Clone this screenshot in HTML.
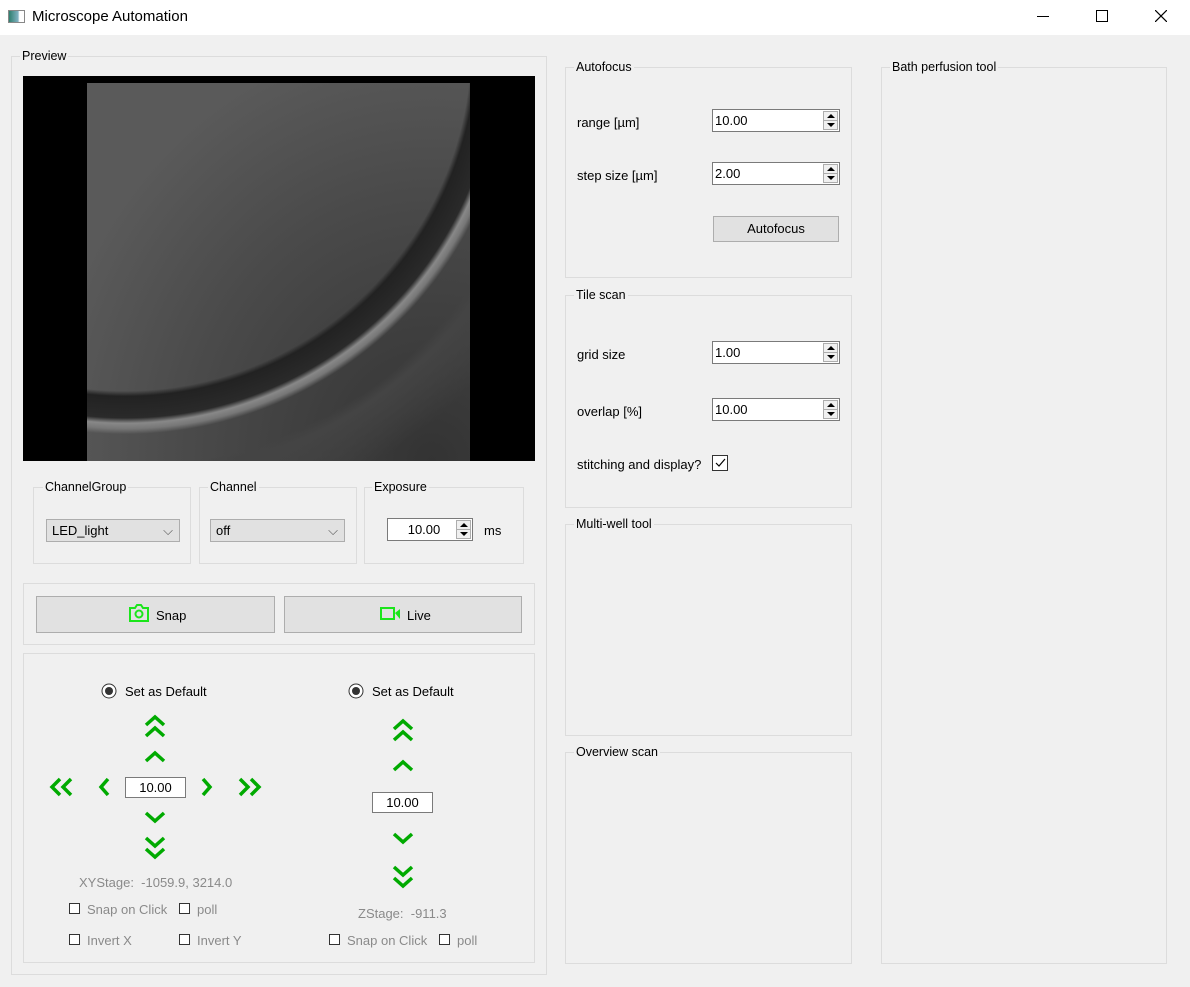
<!DOCTYPE html>
<html><head><meta charset="utf-8"><style>
*{box-sizing:border-box;margin:0;padding:0}
body{width:1190px;height:987px;background:#f0f0f0;font-family:"Liberation Sans",sans-serif;font-size:13px;color:#000;position:relative;overflow:hidden}
.a{position:absolute}
.g{position:absolute;border:1px solid #dcdcdc}
.gt{position:absolute;background:#f0f0f0;padding:0 2px;top:-8px;left:8px;line-height:14px;font-size:12.5px}
.spin{position:absolute;background:#fff;border:1px solid #7a7a7a;height:23px;line-height:22px;padding-left:2px}
.arr{position:absolute;right:1px;top:1px;width:15px;height:19px;border:1px solid #adadad;background:#f0f0f0}
.arr:before{content:"";position:absolute;left:3px;top:2px;border:4px solid transparent;border-bottom:4px solid #000;border-top:0}
.arr:after{content:"";position:absolute;left:3px;bottom:2px;border:4px solid transparent;border-top:4px solid #000;border-bottom:0}
.arr i{position:absolute;left:0;right:0;top:8px;border-top:1px solid #adadad}
.btn{position:absolute;background:#e1e1e1;border:1px solid #adadad;text-align:center}
.combo{position:absolute;background:#e1e1e1;border:1px solid #adadad;height:23px;line-height:22px;padding-left:5px}
.cb{position:absolute;width:11px;height:11px;border:1px solid #333;background:#fff}
.dis{color:#8a8a8a}
svg.c{position:absolute;overflow:visible}
</style></head><body>
<div class="a" style="left:0;top:0;width:1190px;height:35px;background:#fff"></div>
<div class="a" style="left:8px;top:10px;width:17px;height:13px;border:1px solid #888;background:linear-gradient(90deg,#2f7f6f,#7fb0c0 60%,#fff 70%)"></div>
<div class="a" style="left:32px;top:8px;font-size:15px">Microscope Automation</div>
<div class="a" style="left:1037px;top:16px;width:12px;border-top:1px solid #000"></div>
<div class="a" style="left:1096px;top:10px;width:12px;height:12px;border:1px solid #000"></div>
<svg class="a" style="left:1155px;top:10px" width="12" height="12"><path d="M0 0L12 12M12 0L0 12" stroke="#000" stroke-width="1.2"/></svg>

<div class="g" style="left:11px;top:56px;width:536px;height:919px"><span class="gt">Preview</span></div>
<div class="a" style="left:23px;top:76px;width:512px;height:385px;background:#000"></div>
<div class="a" style="left:87px;top:83px;width:383px;height:378px;background:radial-gradient(ellipse at 90% 100%,#333,#4a4a4a 50%,#5a5a5a 80%),#555">
 <div class="a" style="left:0;top:0;width:383px;height:378px;background:radial-gradient(circle at 10% -10%,transparent 64%,#222 65%,#2a2a2a 69%,#888 70%,#777 71%,transparent 72%,transparent 78%,#444 80%,transparent 90%)"></div>
</div>

<div class="g" style="left:33px;top:487px;width:158px;height:77px"><span class="gt" style="left:9px">ChannelGroup</span></div>
<div class="g" style="left:199px;top:487px;width:158px;height:77px"><span class="gt" style="left:8px">Channel</span></div>
<div class="g" style="left:364px;top:487px;width:160px;height:77px"><span class="gt" style="left:7px">Exposure</span></div>
<div class="combo" style="left:46px;top:519px;width:134px">LED_light<span class="a" style="right:6px;top:0;color:#555">⌵</span></div>
<div class="combo" style="left:210px;top:519px;width:135px">off<span class="a" style="right:6px;top:0;color:#555">⌵</span></div>
<div class="spin" style="left:387px;top:518px;width:86px;text-align:center;padding-right:14px">10.00<div class="arr"><i></i></div></div>
<div class="a" style="left:484px;top:523px">ms</div>

<div class="g" style="left:23px;top:583px;width:512px;height:62px"></div>
<div class="btn" style="left:36px;top:596px;width:239px;height:37px"></div>
<div class="btn" style="left:284px;top:596px;width:238px;height:37px"></div>
<svg class="c" style="left:128px;top:603px" width="22" height="20"><path d="M2 5h5l2-3h4l2 3h5v13H2z" fill="none" stroke="#1be51b" stroke-width="2"/><circle cx="11" cy="11" r="3.5" fill="none" stroke="#1be51b" stroke-width="2"/></svg>
<div class="a" style="left:156px;top:608px">Snap</div>
<svg class="c" style="left:380px;top:607px" width="22" height="14"><rect x="1" y="1" width="13" height="11" fill="none" stroke="#1be51b" stroke-width="2"/><path d="M15 6l5-4v10z" fill="#1be51b"/></svg>
<div class="a" style="left:407px;top:608px">Live</div>

<div class="g" style="left:23px;top:653px;width:512px;height:310px"></div>
<svg class="c" style="left:101px;top:683px" width="16" height="16"><circle cx="8" cy="8" r="7" fill="#fff" stroke="#333"/><circle cx="8" cy="8" r="4" fill="#333"/></svg>
<div class="a" style="left:125px;top:684px">Set as Default</div>
<svg class="c" style="left:348px;top:683px" width="16" height="16"><circle cx="8" cy="8" r="7" fill="#fff" stroke="#333"/><circle cx="8" cy="8" r="4" fill="#333"/></svg>
<div class="a" style="left:372px;top:684px">Set as Default</div>

<svg class="a" style="left:0;top:0" width="560" height="987" fill="none" stroke="#00aa00" stroke-width="3.5">
<path d="M146 725l9-8 9 8M146 736l9-8 9 8"/>
<path d="M146 761l9-8 9 8"/>
<path d="M146 813l9 8 9-8"/>
<path d="M146 838l9 8 9-8M146 849l9 8 9-8"/>
<path d="M108 779l-7 8 7 8"/>
<path d="M203 779l7 8-7 8"/>
<path d="M60 779l-8 8 8 8M71 779l-8 8 8 8"/>
<path d="M240 779l8 8-8 8M251 779l8 8-8 8"/>
<path d="M394 729l9-8 9 8M394 740l9-8 9 8"/>
<path d="M394 770l9-8 9 8"/>
<path d="M394 834l9 8 9-8"/>
<path d="M394 867l9 8 9-8M394 878l9 8 9-8"/>
</svg>
<div class="a" style="left:125px;top:777px;width:61px;height:21px;background:#fff;border:1px solid #7a7a7a;text-align:center;line-height:19px">10.00</div>
<div class="a" style="left:372px;top:792px;width:61px;height:21px;background:#fff;border:1px solid #7a7a7a;text-align:center;line-height:19px">10.00</div>
<div class="a dis" style="left:79px;top:875px">XYStage:&nbsp; -1059.9, 3214.0</div>
<div class="cb" style="left:69px;top:903px"></div><div class="a dis" style="left:87px;top:902px">Snap on Click</div>
<div class="cb" style="left:179px;top:903px"></div><div class="a dis" style="left:197px;top:902px">poll</div>
<div class="cb" style="left:69px;top:934px"></div><div class="a dis" style="left:87px;top:933px">Invert X</div>
<div class="cb" style="left:179px;top:934px"></div><div class="a dis" style="left:197px;top:933px">Invert Y</div>
<div class="a dis" style="left:358px;top:906px">ZStage:&nbsp; -911.3</div>
<div class="cb" style="left:329px;top:934px"></div><div class="a dis" style="left:347px;top:933px">Snap on Click</div>
<div class="cb" style="left:439px;top:934px"></div><div class="a dis" style="left:457px;top:933px">poll</div>

<div class="g" style="left:565px;top:67px;width:287px;height:211px"><span class="gt">Autofocus</span></div>
<div class="a" style="left:577px;top:115px">range [µm]</div>
<div class="spin" style="left:712px;top:109px;width:128px">10.00<div class="arr"><i></i></div></div>
<div class="a" style="left:577px;top:168px">step size [µm]</div>
<div class="spin" style="left:712px;top:162px;width:128px">2.00<div class="arr"><i></i></div></div>
<div class="btn" style="left:713px;top:216px;width:126px;height:26px;line-height:24px">Autofocus</div>

<div class="g" style="left:565px;top:295px;width:287px;height:213px"><span class="gt">Tile scan</span></div>
<div class="a" style="left:577px;top:347px">grid size</div>
<div class="spin" style="left:712px;top:341px;width:128px">1.00<div class="arr"><i></i></div></div>
<div class="a" style="left:577px;top:404px">overlap [%]</div>
<div class="spin" style="left:712px;top:398px;width:128px">10.00<div class="arr"><i></i></div></div>
<div class="a" style="left:577px;top:457px">stitching and display?</div>
<div class="cb" style="left:712px;top:455px;width:16px;height:16px"><svg class="a" style="left:2px;top:2px" width="11" height="10"><path d="M1 5l3 3 6-7" fill="none" stroke="#000" stroke-width="1.2"/></svg></div>

<div class="g" style="left:565px;top:524px;width:287px;height:212px"><span class="gt">Multi-well tool</span></div>
<div class="g" style="left:565px;top:752px;width:287px;height:212px"><span class="gt">Overview scan</span></div>
<div class="g" style="left:881px;top:67px;width:286px;height:897px"><span class="gt">Bath perfusion tool</span></div>
</body></html>
